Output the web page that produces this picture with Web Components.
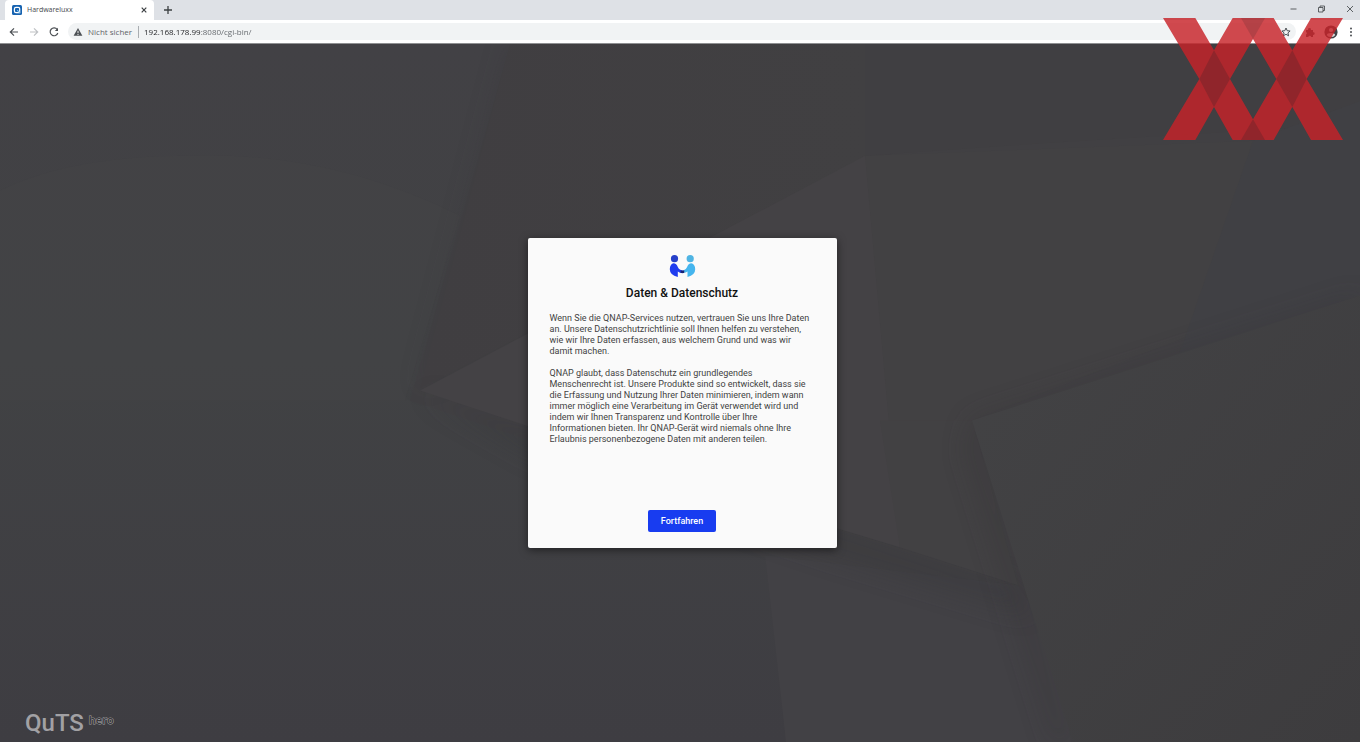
<!DOCTYPE html>
<html lang="de">
<head>
<meta charset="utf-8">
<meta name="viewport" content="width=device-width, initial-scale=1">
<title>Hardwareluxx</title>
<style>
  body {
    margin: 0;
    min-height: 100vh;
    display: flex;
    flex-direction: column;
    position: relative;
    overflow-x: hidden;
    font-family: Roboto, "Liberation Sans", sans-serif;
  }
  login-stage {
    flex: 1;
  }
</style>
</head>
<body>
  <tab-strip>
    <browser-tab>Hardwareluxx</browser-tab>
  </tab-strip>
  <address-bar status="Nicht sicher" url="192.168.178.99:8080/cgi-bin/"></address-bar>
  <login-stage>
    <privacy-dialog>
      <span slot="title">Daten &amp; Datenschutz</span>
      <p>Wenn Sie die QNAP-Services nutzen, vertrauen Sie uns Ihre Daten an. Unsere Datenschutzrichtlinie soll Ihnen helfen zu verstehen, wie wir Ihre Daten erfassen, aus welchem Grund und was wir damit machen.</p>
      <p>QNAP glaubt, dass Datenschutz ein grundlegendes Menschenrecht ist. Unsere Produkte sind so entwickelt, dass sie die Erfassung und Nutzung Ihrer Daten minimieren, indem wann immer möglich eine Verarbeitung im Gerät verwendet wird und indem wir Ihnen Transparenz und Kontrolle über Ihre Informationen bieten. Ihr QNAP-Gerät wird niemals ohne Ihre Erlaubnis personenbezogene Daten mit anderen teilen.</p>
      <span slot="action">Fortfahren</span>
    </privacy-dialog>
    <quts-logo slot="footer"></quts-logo>
  </login-stage>
  <luxx-mark></luxx-mark>

<script>
class TabStrip extends HTMLElement {

    constructor() {
        super()
        this.shadow = this.attachShadow({mode: 'open'})
    }

    connectedCallback() {
        this.shadow.innerHTML = `
        <style>
        :host {
            display: flex;
            align-items: center;
            height: 20px;
            padding-left: 5px;
            background: #dee1e6;
          }
          button {
            display: flex;
            padding: 0;
            border: 0;
            background: none;
            color: #3c4043;
          }
          .new {
            margin-left: 9px;
          }
          .controls {
            display: flex;
            gap: 18px;
            margin: 0 5px 0 auto;
          }
          svg {
            fill: none;
            stroke: currentColor;
          }
        </style>
        <slot></slot>
        <button class="new" aria-label="Neuer Tab">
          <svg width="10" height="10" viewBox="0 0 10 10" stroke-width="1.3"><path d="M5 1v8M1 5h8"/></svg>
        </button>
        <div class="controls">
          <button aria-label="Minimieren"><svg width="10" height="10" viewBox="0 0 10 10" stroke-width=".8"><path d="M1.500 4h6"/></svg></button>
          <button aria-label="Verkleinern"><svg width="10" height="10" viewBox="0 0 10 10" stroke-width=".8"><path d="M1.500 2.500H6v4.500H1.500zM3 2.500V1h4.500v4.500H6"/></svg></button>
          <button aria-label="Schließen"><svg width="10" height="10" viewBox="0 0 10 10" stroke-width=".8"><path d="M2 1l6 6M8 1l-6 6"/></svg></button>
        </div>
        `
    }
}

class BrowserTab extends HTMLElement {

    constructor() {
        super()
        this.shadow = this.attachShadow({mode: 'open'})
    }

    connectedCallback() {
        this.shadow.innerHTML = `
        <style>
        :host {
            display: flex;
            align-items: center;
            gap: 5px;
            width: 137px;
            height: 20px;
            padding: 0 5px 0 7px;
            border-radius: 4px 4px 0 0;
            background: #fff;
            color: #45494d;
            font: 7px/10px "Open Sans", "Noto Sans", sans-serif;
          }
          button {
            display: flex;
            margin-left: auto;
            padding: 0;
            border: 0;
            background: none;
            color: #3c4043;
          }
        </style>
        <svg width="10" height="10" viewBox="0 0 10 10">
          <rect width="10" height="10" rx="1.500" fill="#1763b0"/>
          <path d="M4 2.300h2.200q1.500 0 1.500 1.500v3.900H4q-1.600 0-1.600-1.600V3.900q0-1.600 1.600-1.600z" fill="none" stroke="#fff" stroke-width="1.200"/>
          <path d="M5.200 5.200l2.600 2.600" stroke="#7fc4f5" stroke-width="1.200"/>
        </svg>
        <slot></slot>
        <button aria-label="Tab schließen">
          <svg width="10" height="10" viewBox="0 0 10 10" fill="none" stroke="currentColor" stroke-width="1.200"><path d="M2.700 2.700l4.600 4.600M7.300 2.700l-4.600 4.600"/></svg>
        </button>
        `
    }
}

class AddressBar extends HTMLElement {

    constructor() {
        super()
        this.shadow = this.attachShadow({mode: 'open'})
    }

    connectedCallback() {
        this.shadow.innerHTML = `
        <style>
        :host {
            display: flex;
            align-items: center;
            gap: 8px;
            height: 24px;
            padding: 0 4px 0 8px;
            background: #fff;
            border-bottom: 1px solid #8f9092;
            box-sizing: border-box;
            font: 8px/12px "Open Sans", "Noto Sans", sans-serif;
          }
          button {
            display: flex;
            padding: 0;
            border: 0;
            background: none;
            color: #4c5054;
          }
          button[disabled] {
            color: #bfc1c4;
          }
          .nav, .tools {
            display: flex;
            align-items: center;
            gap: 8px;
          }
          .field {
            flex: 1;
            display: flex;
            align-items: center;
            gap: 5px;
            height: 17px;
            padding: 0 4px 0 5px;
            border-radius: 9px;
            background: #f1f3f4;
            color: #5f6368;
          }
          label {
            padding-right: 6px;
            border-right: 1px solid #a9adb1;
          }
          input {
            flex: 1;
            min-width: 0;
            padding: 0;
            border: 0;
            outline: 0;
            font: inherit;
            /* host part darker than port and path */
            color: #5f6368;
            background: linear-gradient(90deg, #202124 57px, #5f6368 57px);
            -webkit-background-clip: text;
            background-clip: text;
            -webkit-text-fill-color: transparent;
          }
        </style>
        <div class="nav">
          <button aria-label="Zurück"><svg width="12" height="12" viewBox="0 0 12 12" fill="none" stroke="currentColor" stroke-width="1.200"><path d="M10 6H2.500M6 2.300L2.300 6 6 9.700"/></svg></button>
          <button aria-label="Vorwärts" disabled><svg width="12" height="12" viewBox="0 0 12 12" fill="none" stroke="currentColor" stroke-width="1.200"><path d="M2 6h7.500M6 2.300L9.700 6 6 9.700"/></svg></button>
          <button aria-label="Neu laden"><svg width="12" height="12" viewBox="0 0 12 12" fill="none" stroke="currentColor" stroke-width="1.200"><path d="M9.200 3.500A3.900 3.900 0 1 0 9.800 7"/><path d="M10 1.800v3.200H6.800z" fill="currentColor" stroke="none"/></svg></button>
        </div>
        <div class="field">
          <svg width="10" height="10" viewBox="0 0 10 10"><path d="M5 1l4.400 7.800H.6z" fill="#4c5054"/><path d="M5 3.800v2.400M5 7v1" stroke="#fff" stroke-width=".9"/></svg>
          <label for="url">${this.getAttribute('status')}</label>
          <input id="url" type="text" value="${this.getAttribute('url')}">
          <button aria-label="Lesezeichen"><svg width="12" height="12" viewBox="0 0 12 12" fill="none" stroke="currentColor" stroke-width="1"><path d="M6 2l1.200 2.700 2.900.3-2.200 1.900.7 2.900L6 8.300 3.400 9.800l.7-2.900L1.900 5l2.900-.3z"/></svg></button>
        </div>
        <div class="tools">
          <button aria-label="Erweiterungen"><svg width="12" height="12" viewBox="0 0 12 12" fill="currentColor"><path d="M2 4h2.200a1.400 1.400 0 1 1 2.600 0H9v2.300a1.300 1.300 0 1 1 0 2.500V11H7a1.300 1.300 0 0 0-2.600 0H2V8.500a1.300 1.300 0 0 0 0-2.400z"/></svg></button>
          <button aria-label="Profil"><svg width="14" height="14" viewBox="0 0 14 14"><circle cx="7" cy="7" r="6.600" fill="#3f4347"/><circle cx="7" cy="5" r="2.100" fill="#d9dadc"/><path d="M2.900 10.200q0-2.300 4.100-2.300t4.100 2.300q-1.600 1.900-4.100 1.900t-4.100-1.900z" fill="#d9dadc"/></svg></button>
          <button aria-label="Menü"><svg width="10" height="12" viewBox="0 0 10 12" fill="currentColor"><circle cx="5" cy="2.500" r="1"/><circle cx="5" cy="6" r="1"/><circle cx="5" cy="9.500" r="1"/></svg></button>
        </div>
        `
    }
}

class LoginStage extends HTMLElement {

    constructor() {
        super()
        this.shadow = this.attachShadow({mode: 'open'})
    }

    connectedCallback() {
        this.shadow.innerHTML = `
        <style>
        :host {
            display: grid;
            grid-template-rows: 1fr auto 1fr;
            position: relative;
            background: #403f42;
          }
          .wall {
            position: absolute;
            inset: 0;
            width: 100%;
            height: 100%;
          }
          .middle {
            position: relative;
            grid-row: 2;
            justify-self: center;
            padding-left: 4px;
          }
          .footer {
            position: relative;
            grid-row: 3;
            align-self: end;
            padding: 0 25px 7px;
          }
        </style>
        <svg class="wall" viewBox="0 43 1360 699" preserveAspectRatio="none" aria-hidden="true">
          <defs>
            <linearGradient id="left" x1="0" y1="0" x2="0" y2="1">
              <stop offset="0" stop-color="#424145"/>
              <stop offset=".45" stop-color="#414244"/>
              <stop offset="1" stop-color="#3e3d42"/>
            </linearGradient>
            <linearGradient id="right" x1="0" y1="0" x2="1" y2="1">
              <stop offset="0" stop-color="#434345"/>
              <stop offset="1" stop-color="#3d3c3e"/>
            </linearGradient>
            <linearGradient id="top" x1="0" y1="0" x2="1" y2="0">
              <stop offset="0" stop-color="#403e41"/>
              <stop offset="1" stop-color="#414042"/>
            </linearGradient>
            <filter id="soft" x="-20%" y="-20%" width="140%" height="140%"><feGaussianBlur stdDeviation="12"/></filter>
          </defs>
          <rect y="43" width="1360" height="699" fill="#414043"/>
          <path d="M0 43h510L410 400l120 40 240 120 16 182H0z" fill="url(#left)"/>
          <path d="M0 190Q70 155 190 155Q330 150 460 215L405 400H0z" fill="#434446" opacity=".5"/>
          <path d="M510 43h360v110L420 388z" fill="#343235" opacity=".25" filter="url(#soft)"/>
          <path d="M510 43h360v110L420 388z" fill="url(#top)"/>
          <path d="M865 43v112l170-12 325-20V43z" fill="#403f42"/>
          <path d="M865 155l390-15-65 195-218 85 46 165-178-56z" fill="#424143"/>
          <path d="M1253 140l107-40v195l-182 62z" fill="#404044"/>
          <path d="M765 555l253 30q45 65 53 157H786z" fill="#424145"/>
          <path d="M420 392l420 137 178 56 14 30-200-60-300-100z" fill="#353437" opacity=".35" filter="url(#soft)"/>
          <path d="M420 390L865 155l35 392L840 529z" fill="#444245"/>
          <path d="M900 547l-20-127h92l46 165z" fill="#424143"/>
          <path d="M972 420l388-125v20L985 440l85 302h-15L965 450z" fill="#343336" opacity=".35" filter="url(#soft)"/>
          <path d="M972 420l388-125v447h-287z" fill="url(#right)"/>
        </svg>
        <div class="middle"><slot></slot></div>
        <div class="footer"><slot name="footer"></slot></div>
        `
    }
}

class PrivacyDialog extends HTMLElement {

    constructor() {
        super()
        this.shadow = this.attachShadow({mode: 'open'})
    }

    connectedCallback() {
        this.shadow.innerHTML = `
        <style>
        :host {
            display: flex;
            flex-direction: column;
            align-items: center;
            box-sizing: border-box;
            width: 309px;
            max-width: 100%;
            min-height: 310px;
            padding: 17px 22px 16px;
            border-radius: 2px;
            background: #fafafa;
            box-shadow: 0 2px 8px rgba(0, 0, 0, .5);
            color: #424242;
          }
          h1 {
            margin: 8px 0 12px;
            color: #111;
            font-size: 12px;
            line-height: 16px;
            font-weight: 500;
          }
          .text {
            align-self: stretch;
            font-size: 9px;
            line-height: 11px;
          }
          ::slotted(p) {
            margin: 0 0 11px;
          }
          button {
            height: 22px;
            margin-top: auto;
            padding: 0 13px;
            border: 0;
            border-radius: 2px;
            background: #183cf0;
            color: #fff;
            font: 500 9px/12px Roboto, sans-serif;
          }
        </style>
        <svg width="27" height="22" viewBox="0 0 27 22">
          <circle cx="5.500" cy="3.700" r="3.600" fill="#2640c9"/>
          <circle cx="21.200" cy="3.700" r="3.600" fill="#4fb4e3"/>
          <path d="M4.300 8.200Q7.700 8.200 8.800 12q1.300 3.400 5.700 3.600v2.500q-3.500.3-5.700-1.600V22Q.8 20 .8 14.200q0-4.700 3.500-6z" fill="#1f3cef"/>
          <path d="M22.500 8.200Q19.200 8.200 18.100 12q-.9 2.600-3.800 3.400l-.6 2.400q2.900.2 4.800-1.300V22q7.700-2 7.700-7.800 0-4.700-3.700-6z" fill="#45b5ee"/>
          <path d="M11.800 15.300q1.700.7 3.400 0v2.600q-2 .5-3.700-.2z" fill="#17226f"/>
        </svg>
        <h1><slot name="title"></slot></h1>
        <div class="text"><slot></slot></div>
        <button><slot name="action"></slot></button>
        `
    }
}

class QutsLogo extends HTMLElement {

    constructor() {
        super()
        this.shadow = this.attachShadow({mode: 'open'})
    }

    connectedCallback() {
        this.shadow.innerHTML = `
        <style>
        :host {
            display: flex;
            align-items: flex-start;
            gap: 5px;
            color: #a2a1a4;
            font: 500 24px/24px Roboto, sans-serif;
          }
          sup {
            color: #38373b;
            font-family: "Open Sans", "Noto Sans", sans-serif;
            font-size: 11px;
            line-height: 18px;
            font-weight: 600;
            -webkit-text-stroke: 1px #a2a1a4;
            paint-order: stroke fill;
          }
        </style>
        <span>QuTS</span><sup>hero</sup>
        `
    }
}

class LuxxMark extends HTMLElement {

    constructor() {
        super()
        this.shadow = this.attachShadow({mode: 'open'})
    }

    connectedCallback() {
        this.shadow.innerHTML = `
        <style>
        :host {
            position: absolute;
            top: 18px;
            right: 17px;
            pointer-events: none;
          }
          svg {
            display: block;
          }
        </style>
        <svg width="180" height="122" viewBox="0 0 540 366" aria-hidden="true">
          <path d="M0 0H97L153 97 209 0H332L388 97 444 0H540L431 183 540 366H444L388 267 332 366H209L153 267 97 366H0L109 183zM270 63L201 183 270 304 340 183z" fill="#c72228" fill-opacity=".82" fill-rule="evenodd"/>
          <path d="M153 97L201 183 153 267 109 183zM388 97L431 183 388 267 340 183zM270 304L306 366H234z" fill="#3a2226" fill-opacity=".26"/>
          <path d="M234 0H306L270 63z" fill="#3a2226" fill-opacity=".18"/>
        </svg>
        `
    }
}

customElements.define('tab-strip', TabStrip)
customElements.define('browser-tab', BrowserTab)
customElements.define('address-bar', AddressBar)
customElements.define('login-stage', LoginStage)
customElements.define('privacy-dialog', PrivacyDialog)
customElements.define('quts-logo', QutsLogo)
customElements.define('luxx-mark', LuxxMark)
</script>
</body>
</html>
